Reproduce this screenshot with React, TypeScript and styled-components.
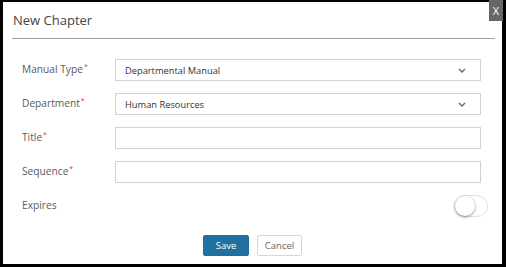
import React, { useState } from 'react';
import styled, { createGlobalStyle } from 'styled-components';

const GlobalStyle = createGlobalStyle`
  html, body {
    margin: 0;
    padding: 0;
    background: #000;
    font-family: 'Open Sans', 'Liberation Sans', sans-serif;
  }
  * { box-sizing: border-box; }
`;

const Dialog = styled.div`
  position: relative;
  margin: 2px 0 0 3px;
  width: 499px;
  height: 262px;
  background: #fff;
  display: flex;
  flex-direction: column;
`;

const CloseButton = styled.button`
  position: absolute;
  top: -2px;
  right: -1px;
  width: 14px;
  height: 21px;
  padding: 0;
  border: none;
  background: #666;
  color: #fff;
  font-family: 'Open Sans', sans-serif;
  font-size: 11px;
  line-height: 21px;
  cursor: pointer;
`;

const Header = styled.div`
  margin: 0 7px 0 9px;
  height: 37px;
  padding: 9px 0 0 1px;
  border-bottom: 1px solid #9e9e9e;
  font-size: 13px;
  color: #444;
`;

const Form = styled.div`
  display: flex;
  flex-direction: column;
  gap: 12px;
  padding: 20px 21px 0 19px;
`;

const Row = styled.div`
  display: grid;
  grid-template-columns: 93px 1fr;
  align-items: center;
  height: 22px;
`;

const Label = styled.label`
  font-size: 10.2px;
  color: #5a5a5a;
  padding-bottom: 3px;
`;

const Star = styled.sup`
  color: #e53935;
  font-size: 7px;
  margin-left: 1px;
  vertical-align: 4px;
  line-height: 0;
`;

const Field = styled.div`
  position: relative;
  height: 22px;
  border: 1px solid #d2d2d2;
  display: flex;
  align-items: center;
  padding: 0 14px 0 9px;
  font-size: 9.3px;
  color: #333;
`;

const Value = styled.span`
  flex: 1;
`;

const ToggleCell = styled.div`
  display: flex;
  justify-content: flex-end;
  margin-right: -7px;
`;

const Track = styled.div<{ $on: boolean }>`
  position: relative;
  width: 34px;
  height: 22px;
  border-radius: 11px;
  border: 1px solid #e2e2e2;
  background: ${p => (p.$on ? '#2270a0' : '#fff')};
  cursor: pointer;
`;

const Knob = styled.div<{ $on: boolean }>`
  position: absolute;
  top: 0;
  left: ${p => (p.$on ? '12px' : '0')};
  width: 20px;
  height: 20px;
  border-radius: 50%;
  background: #fff;
  box-shadow: 0 1px 3px rgba(0, 0, 0, 0.45);
`;

const Actions = styled.div`
  display: flex;
  justify-content: center;
  gap: 8px;
  margin-top: 18px;
`;

const Button = styled.button<{ $primary?: boolean }>`
  width: ${p => (p.$primary ? '46px' : '45px')};
  height: 21px;
  padding: 0;
  border-radius: 2px;
  border: 1px solid ${p => (p.$primary ? '#1f6d9b' : '#d6d6d6')};
  background: ${p => (p.$primary ? '#2270a0' : '#fff')};
  color: ${p => (p.$primary ? '#fff' : '#666')};
  font-family: 'Open Sans', sans-serif;
  font-size: 9.5px;
  cursor: pointer;
`;

const Chevron = () => (
  <svg width="8" height="5" viewBox="0 0 8 5">
    <polyline points="1,1 4,4 7,1" fill="none" stroke="#666" strokeWidth="1.4" />
  </svg>
);

const Req = ({ text }: { text: string }) => (
  <Label>
    {text}
    <Star>*</Star>
  </Label>
);

const App = () => {
  const [expires, setExpires] = useState(false);

  return (
    <>
      <GlobalStyle />
      <Dialog>
        <CloseButton>X</CloseButton>
        <Header>New Chapter</Header>
        <Form>
          <Row>
            <Req text="Manual Type" />
            <Field>
              <Value>Departmental Manual</Value>
              <Chevron />
            </Field>
          </Row>
          <Row>
            <Req text="Department" />
            <Field>
              <Value>Human Resources</Value>
              <Chevron />
            </Field>
          </Row>
          <Row>
            <Req text="Title" />
            <Field />
          </Row>
          <Row>
            <Req text="Sequence" />
            <Field />
          </Row>
          <Row>
            <Label>Expires</Label>
            <ToggleCell>
              <Track $on={expires} onClick={() => setExpires(!expires)}>
                <Knob $on={expires} />
              </Track>
            </ToggleCell>
          </Row>
        </Form>
        <Actions>
          <Button $primary>Save</Button>
          <Button>Cancel</Button>
        </Actions>
      </Dialog>
    </>
  );
};

export default App;
